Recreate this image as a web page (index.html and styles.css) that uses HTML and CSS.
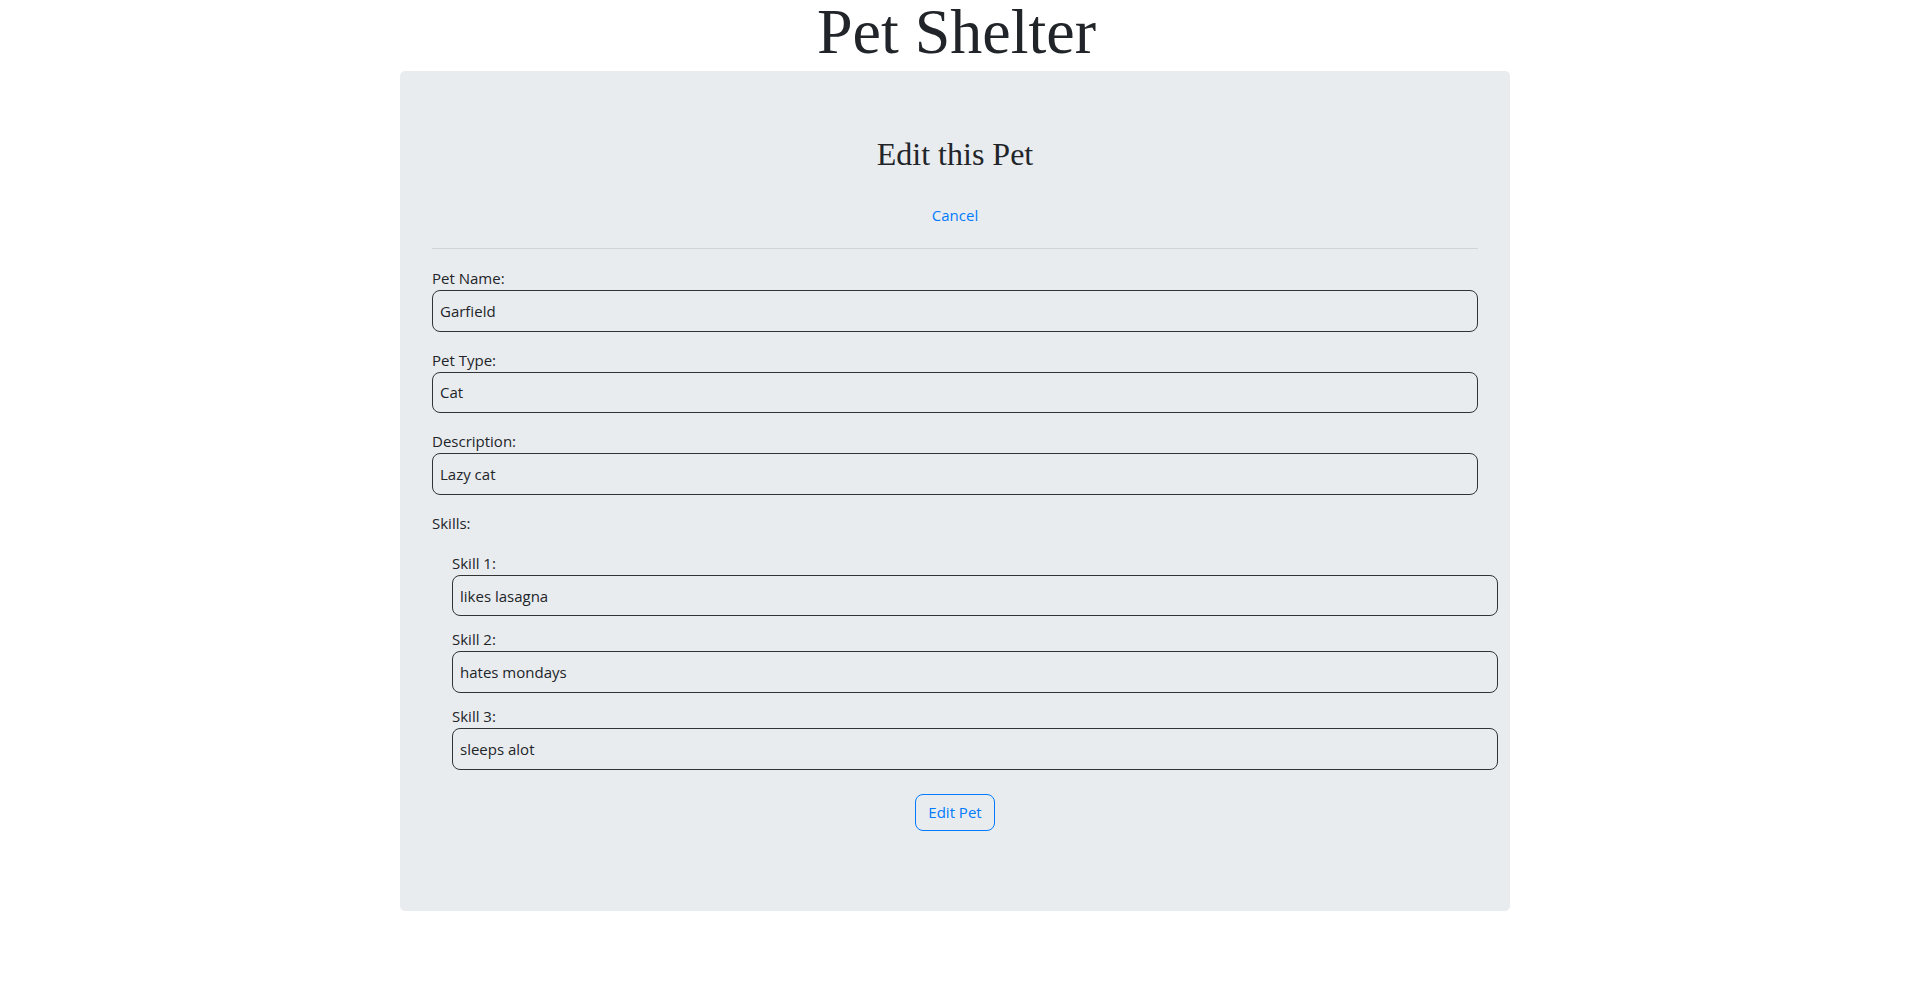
FILE: index.html
```html
<!DOCTYPE html>
<html lang="en">
<head>
<meta charset="utf-8">
<title>Pet Shelter</title>
<link rel="stylesheet" href="styles.css">
</head>
<body>
<h1 class="title">Pet Shelter</h1>
<div class="jumbotron">
  <h2 class="subtitle">Edit this Pet</h2>
  <div class="cancel"><a href="#" class="link">Cancel</a></div>
  <hr class="divider">
  <form class="pet-form">
    <div class="field">
      <label class="field-label">Pet Name:</label>
      <input class="field-input" type="text" value="Garfield">
    </div>
    <div class="field">
      <label class="field-label">Pet Type:</label>
      <input class="field-input" type="text" value="Cat">
    </div>
    <div class="field">
      <label class="field-label">Description:</label>
      <input class="field-input" type="text" value="Lazy cat">
    </div>
    <div class="skills-label">Skills:</div>
    <div class="skills">
      <div class="skill">
        <label class="field-label">Skill 1:</label>
        <input class="field-input" type="text" value="likes lasagna">
      </div>
      <div class="skill">
        <label class="field-label">Skill 2:</label>
        <input class="field-input" type="text" value="hates mondays">
      </div>
      <div class="skill">
        <label class="field-label">Skill 3:</label>
        <input class="field-input" type="text" value="sleeps alot">
      </div>
    </div>
    <div class="actions">
      <button type="button" class="btn-outline">Edit Pet</button>
    </div>
  </form>
</div>
</body>
</html>
```

FILE: styles.css
```css
* { box-sizing: border-box; }

body {
  margin: 0;
  font-family: "Open Sans", "Noto Sans", sans-serif;
  font-size: 15px;
  line-height: 24px;
  color: #212529;
  background: #fff;
}

.title {
  margin: 0 0 7px;
  text-align: center;
  font-family: "Liberation Serif", "Times New Roman", serif;
  font-weight: 400;
  font-size: 64px;
  line-height: 64px;
  color: #212529;
}

.jumbotron {
  width: 1110px;
  margin: 0 0 0 calc(50% - 556.5px);
  padding: 64px 32px;
  background: #e9ecef;
  border-radius: 5px;
}

.subtitle {
  margin: 0 0 29.6px;
  text-align: center;
  font-family: "Liberation Serif", "Times New Roman", serif;
  font-weight: 400;
  font-size: 32px;
  line-height: 38.4px;
}

.cancel {
  text-align: center;
  margin-bottom: 21px;
}

.link {
  color: #007bff;
  text-decoration: none;
}

.divider {
  margin: 0 0 17px;
  border: 0;
  border-top: 1px solid rgba(0, 0, 0, 0.1);
  height: 0;
}

.pet-form {
  margin: 0;
}

.field {
  margin-bottom: 16px;
}

.field-label {
  display: block;
  height: 24px;
}

.field-input {
  display: block;
  width: 100%;
  height: 41.6px;
  margin: 0;
  padding: 0 7px;
  font-family: inherit;
  font-size: 15px;
  color: #212529;
  background: transparent;
  border: 1px solid #333;
  border-radius: 8px;
  outline: none;
}

.skills-label {
  margin-bottom: 16px;
}

.skills {
  margin-left: 20px;
  margin-right: -20px;
}

.skill {
  margin-bottom: 11px;
}

.actions {
  display: flex;
  justify-content: center;
  margin-top: 24px;
  margin-bottom: 15.5px;
}

.btn-outline {
  height: 37.5px;
  padding: 0 12px;
  font-family: inherit;
  font-size: 15px;
  line-height: 24px;
  color: #007bff;
  background: transparent;
  border: 1px solid #007bff;
  border-radius: 8px;
  cursor: pointer;
}
```
